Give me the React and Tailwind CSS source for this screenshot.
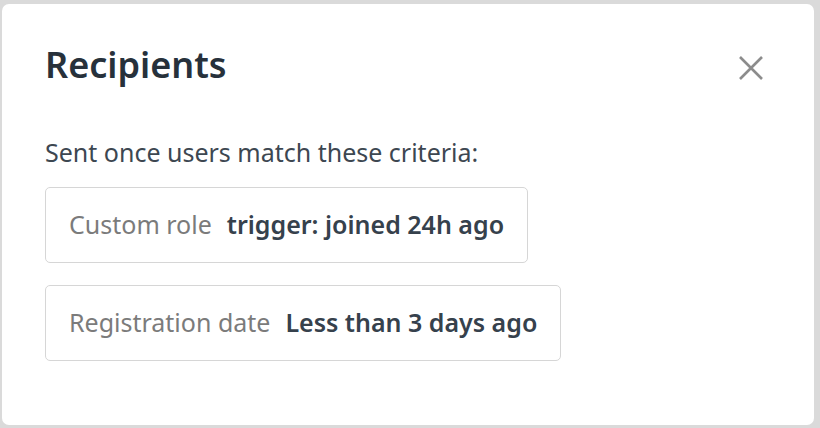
export default function App() {
  const criteria = [
    { label: "Custom role", value: "trigger: joined 24h ago" },
    { label: "Registration date", value: "Less than 3 days ago" },
  ];

  return (
    <div
      className="w-[820px] h-[428px] bg-[#dadada] pt-[4px] pl-[2px] pr-[6px] pb-[3px]"
      style={{ fontFamily: '"Noto Sans", "Open Sans", sans-serif' }}
    >
      <div className="h-full bg-white rounded-[7px] px-[43px] pt-[37px]">
        <div className="flex items-start justify-between">
          <h1 className="text-[36px] font-semibold text-[#27313b] leading-[48px]">
            Recipients
          </h1>
          <button className="mt-[14px] mr-[7px] text-[#8c8c8c]">
            <svg width="26" height="26" viewBox="0 0 26 26" fill="none" stroke="currentColor" strokeWidth="2.6">
              <path d="M2 2L24 24M24 2L2 24" />
            </svg>
          </button>
        </div>
        <p className="mt-[46px] text-[25px] text-[#3d4751] leading-[34px]">
          Sent once users match these criteria:
        </p>
        <div className="mt-[18px] flex flex-col items-start gap-[22px]">
          {criteria.map((c) => (
            <div
              key={c.label}
              className="h-[76px] pl-[23px] pr-[23px] flex items-center border border-[#d6d6d6] rounded-[5px] text-[25px]"
            >
              <span className="text-[#7b7b7b]">{c.label}</span>
              <span className="ml-[15px] font-semibold text-[#36414c]">{c.value}</span>
            </div>
          ))}
        </div>
      </div>
    </div>
  );
}
